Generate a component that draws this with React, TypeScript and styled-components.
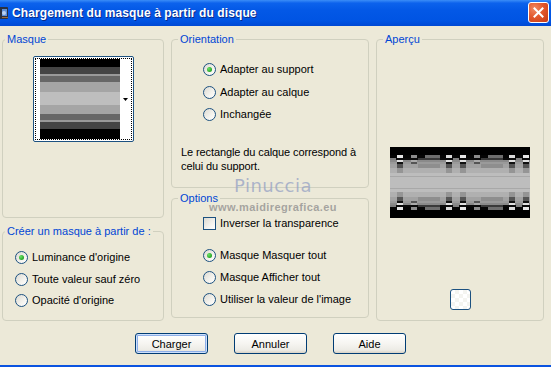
import React from 'react'
import styled, { createGlobalStyle } from 'styled-components'

const GlobalStyle = createGlobalStyle`
  html, body { margin: 0; padding: 0; background: #ECE9D8; }
  body { font-family: "Liberation Sans", Arial, sans-serif; font-size: 11px; color: #000; }
`

const Window = styled.div`
  position: relative;
  width: 551px;
  height: 367px;
  display: flex;
  flex-direction: column;
  background: #ECE9D8;
  border-bottom: 2px solid #0A53E0;
  box-sizing: border-box;
  overflow: hidden;
`
const TitleBar = styled.div`
  height: 26px;
  flex: none;
  display: flex;
  align-items: center;
  padding-right: 2px;
  background: linear-gradient(to bottom, #3B8DF7 0%, #0C62EC 12%, #0358E6 40%, #0054E3 80%, #0049D4 100%);
  box-sizing: border-box;
`
const TitleIcon = styled.div`
  width: 9px;
  height: 14px;
  margin-right: 3px;
  overflow: hidden;
  display: flex;
  justify-content: flex-end;
`
const TitleText = styled.div`
  flex: 1;
  color: #fff;
  font-weight: bold;
  font-size: 12px;
  letter-spacing: 0.1px;
  text-shadow: 1px 1px 0 #0A2A88;
`
const CloseButton = styled.div`
  width: 21px;
  height: 21px;
  margin-top: -2px;
  box-sizing: border-box;
  border: 1px solid #fff;
  border-radius: 3px;
  background: radial-gradient(circle at 30% 30%, #F08A64 0%, #E2582D 45%, #C63A14 100%);
  display: flex;
  align-items: center;
  justify-content: center;
`
const Body = styled.div`
  flex: 1;
  display: flex;
  flex-direction: column;
  padding-top: 7px;
`
const Columns = styled.div`
  display: grid;
  grid-template-columns: 162px 198px 168px;
  column-gap: 7px;
  padding-left: 2px;
  height: 288px;
`
const Column = styled.div<{ $gap?: number }>`
  display: flex;
  flex-direction: column;
  gap: ${p => p.$gap ?? 6}px;
`
const Group = styled.fieldset<{ $height?: number }>`
  margin: 0;
  min-width: 0;
  box-sizing: border-box;
  border: 1px solid #D0D0BF;
  border-radius: 4px;
  padding: 0;
  display: flex;
  flex-direction: column;
  ${p => (p.$height ? `height: ${p.$height}px; flex: none;` : 'flex: 1;')}
`
const Legend = styled.legend<{ $indent?: number }>`
  color: #0046D5;
  font-size: 11px;
  line-height: 13px;
  padding: 0 2px;
  margin-left: ${p => p.$indent ?? 6}px;
`
const GroupContent = styled.div<{ $top: number; $left?: number; $center?: boolean }>`
  display: flex;
  flex-direction: column;
  align-items: ${p => (p.$center ? 'center' : 'flex-start')};
  padding-top: ${p => p.$top}px;
  padding-left: ${p => p.$left ?? 0}px;
`
const OptionList = styled.div<{ $gap: number }>`
  display: flex;
  flex-direction: column;
  gap: ${p => p.$gap}px;
`
const Option = styled.label`
  display: flex;
  align-items: center;
  gap: 4px;
  height: 13px;
  line-height: 13px;
  white-space: nowrap;
`
const RadioDot = styled.span<{ $checked?: boolean }>`
  width: 13px;
  height: 13px;
  flex: none;
  box-sizing: border-box;
  border-radius: 50%;
  border: 1px solid #1C5180;
  background: linear-gradient(135deg, #DCDAD2 0%, #F4F3EE 60%, #FFFFFF 100%);
  display: flex;
  align-items: center;
  justify-content: center;
  &::after {
    content: '';
    width: 5px;
    height: 5px;
    border-radius: 50%;
    background: radial-gradient(circle at 35% 35%, #6BE267, #21A121 75%);
    display: ${p => (p.$checked ? 'block' : 'none')};
  }
`
const CheckBox = styled.span`
  width: 13px;
  height: 13px;
  flex: none;
  box-sizing: border-box;
  border: 1px solid #1C5180;
  background: linear-gradient(135deg, #DCDAD2 0%, #F4F3EE 60%, #FFFFFF 100%);
`
const Note = styled.p`
  margin: 24px 0 0 -22px;
  line-height: 14px;
  letter-spacing: -0.1px;
`
const MaskPicker = styled.div`
  width: 101px;
  height: 86px;
  box-sizing: border-box;
  border: 1px solid #1C5180;
  border-radius: 2px;
  background: #fff;
  padding: 1px;
`
const FocusRect = styled.div`
  height: 100%;
  box-sizing: border-box;
  border: 1px dotted #000;
  display: flex;
  align-items: center;
  padding: 2px 2px 2px 4px;
`
const MaskStrip = styled.div`
  flex: 1;
  height: 100%;
  display: flex;
  align-items: center;
  justify-content: flex-end;
  background: #fff;
`
const Preview = styled.div`
  margin-top: 101px;
  width: 140px;
  height: 71px;
  line-height: 0;
`
const SmallButton = styled.div`
  margin-top: 71px;
  width: 21px;
  height: 21px;
  box-sizing: border-box;
  border: 1px solid #1C5180;
  border-radius: 3px;
  background: repeating-conic-gradient(#F4F4F0 0% 25%, #FFFFFF 0% 50%) 0 0 / 8px 8px;
`
const ButtonRow = styled.div`
  display: flex;
  gap: 26px;
  padding-left: 135px;
  margin-top: 12px;
`
const Button = styled.button<{ $default?: boolean }>`
  width: 73px;
  height: 21px;
  padding: 0;
  box-sizing: border-box;
  border: 1px solid #003C74;
  border-radius: 3px;
  background: linear-gradient(to bottom, #FFFFFF 0%, #F6F5F1 50%, #ECEBE5 85%, #D8D2C6 100%);
  font-family: "Liberation Sans", Arial, sans-serif;
  font-size: 11px;
  color: #000;
  ${p => (p.$default ? 'box-shadow: inset 0 0 0 1px #CEE0FB, inset 0 0 0 2px #8EAFE8;' : '')}
`
const Watermark = styled.div`
  position: absolute;
  left: 212px;
  top: 175px;
  width: 122px;
  display: flex;
  flex-direction: column;
  align-items: center;
  pointer-events: none;
`
const WatermarkName = styled.div`
  font-family: "DejaVu Sans", sans-serif;
  font-size: 18px;
  line-height: 21px;
  letter-spacing: 0.5px;
  color: rgba(150, 162, 196, 0.75);
`
const WatermarkSite = styled.div`
  font-family: "Liberation Sans", Arial, sans-serif;
  font-size: 11px;
  font-weight: bold;
  line-height: 13px;
  letter-spacing: 0.4px;
  color: rgba(140, 140, 140, 0.75);
  margin-top: 5px;
`

const maskBands: [number, number, string][] = [
  [0, 8, '#000'], [8, 15, '#454545'], [15, 17, '#9A9A9A'], [17, 23, '#676767'],
  [23, 33, '#A5A5A5'], [33, 46, '#BEBEBE'], [46, 55, '#A5A5A5'], [55, 61, '#676767'],
  [61, 63, '#9A9A9A'], [63, 70, '#454545'], [70, 80, '#000'],
]

function MaskImage() {
  return (
    <svg width="80" height="80" viewBox="0 0 80 80" style={{ display: 'block', flex: 'none' }}>
      {maskBands.map(([y0, y1, c], i) => (
        <rect key={i} x="0" y={y0} width="80" height={y1 - y0} fill={c} />
      ))}
    </svg>
  )
}

// one half of the preview, mirrored below
const previewTop: { y: number; h: number; base: string; cols: [number, number, string][] }[] = [
  { y: 0, h: 8, base: '#000', cols: [] },
  { y: 8, h: 3, base: '#050505', cols: [[7, 6, '#E6E6E6'], [21, 6, '#8C8C8C'], [35, 15, '#6E6E6E'], [56, 6, '#DADADA']] },
  { y: 11, h: 2, base: '#0A0A0A', cols: [[0, 6, '#808080'], [28, 22, '#3A3A3A']] },
  { y: 13, h: 2, base: '#8A8A8A', cols: [[7, 6, '#E0E0E0'], [56, 6, '#E0E0E0'], [21, 6, '#AAAAAA']] },
  { y: 15, h: 2, base: '#9A9A9A', cols: [[7, 6, '#111'], [21, 6, '#555'], [56, 6, '#111']] },
  { y: 17, h: 4, base: '#A2A2A2', cols: [[7, 6, '#555'], [28, 22, '#8E8E8E'], [56, 6, '#555']] },
  { y: 21, h: 5, base: '#B0B0B0', cols: [[7, 6, '#959595'], [56, 6, '#959595']] },
  { y: 26, h: 10, base: '#BDBDBD', cols: [] },
]

function PreviewImage() {
  const period = 63
  const rows: React.ReactNode[] = []
  previewTop.forEach((r, i) => {
    ;[r.y, 71 - r.y - r.h].forEach((y, side) => {
      rows.push(<rect key={`b${i}-${side}`} x="0" y={y} width="140" height={r.h} fill={r.base} />)
      r.cols.forEach(([x, w, c], j) => {
        for (let off = 0; off + x < 140; off += period) {
          rows.push(
            <rect key={`c${i}-${side}-${j}-${off}`} x={x + off} y={y} width={w} height={r.h} fill={c} />
          )
        }
      })
    })
  })
  return (
    <svg width="140" height="71" viewBox="0 0 140 71" style={{ display: 'block' }}>
      {rows}
      <rect x="0" y="41" width="140" height="1" fill="#A8A8A8" />
      <rect x="0" y="29" width="140" height="1" fill="#A8A8A8" />
    </svg>
  )
}

function Radio({ checked, children }: { checked?: boolean; children: React.ReactNode }) {
  return (
    <Option>
      <RadioDot $checked={checked} />
      {children}
    </Option>
  )
}

export default function App() {
  return (
    <>
      <GlobalStyle />
      <Window>
        <TitleBar>
          <TitleIcon>
            <svg width="16" height="14" viewBox="0 0 16 14" style={{ flex: 'none' }}>
              <rect x="1" y="1" width="14" height="12" rx="1" fill="#2A3140" />
              <rect x="9" y="3" width="5" height="7" fill="#5C8FD8" />
              <circle cx="11" cy="7" r="2" fill="#B8D0F0" />
              <rect x="9" y="11" width="6" height="1" fill="#9C6B3A" />
            </svg>
          </TitleIcon>
          <TitleText>Chargement du masque à partir du disque</TitleText>
          <CloseButton>
            <svg width="11" height="11" viewBox="0 0 11 11">
              <path d="M1.5 1.5 L9.5 9.5 M9.5 1.5 L1.5 9.5" stroke="#fff" strokeWidth="2" strokeLinecap="square" />
            </svg>
          </CloseButton>
        </TitleBar>
        <Body>
          <Columns>
            <Column $gap={7}>
              <Group $height={185}>
                <Legend $indent={2}>Masque</Legend>
                <GroupContent $top={10} $center>
                  <MaskPicker>
                    <FocusRect>
                      <MaskImage />
                      <MaskStrip>
                        <svg width="5" height="3" viewBox="0 0 5 3" style={{ marginRight: 1 }}>
                          <path d="M0 0 H5 L2.5 3 Z" fill="#000" />
                        </svg>
                      </MaskStrip>
                    </FocusRect>
                  </MaskPicker>
                </GroupContent>
              </Group>
              <Group>
                <Legend $indent={2}>Créer un masque à partir de :</Legend>
                <GroupContent $top={13} $left={12}>
                  <OptionList $gap={8.5}>
                    <Radio checked>Luminance d'origine</Radio>
                    <Radio>Toute valeur sauf zéro</Radio>
                    <Radio>Opacité d'origine</Radio>
                  </OptionList>
                </GroupContent>
              </Group>
            </Column>
            <Column $gap={4}>
              <Group $height={155}>
                <Legend $indent={6}>Orientation</Legend>
                <GroupContent $top={17} $left={31}>
                  <OptionList $gap={9.5}>
                    <Radio checked>Adapter au support</Radio>
                    <Radio>Adapter au calque</Radio>
                    <Radio>Inchangée</Radio>
                  </OptionList>
                  <Note>
                    Le rectangle du calque correspond à
                    <br />
                    celui du support.
                  </Note>
                </GroupContent>
              </Group>
              <Group $height={126}>
                <Legend $indent={6}>Options</Legend>
                <GroupContent $top={12} $left={31}>
                  <Option>
                    <CheckBox />
                    Inverser la transparence
                  </Option>
                  <OptionList $gap={9} style={{ marginTop: 19 }}>
                    <Radio checked>Masque Masquer tout</Radio>
                    <Radio>Masque Afficher tout</Radio>
                    <Radio>Utiliser la valeur de l'image</Radio>
                  </OptionList>
                </GroupContent>
              </Group>
            </Column>
            <Column>
              <Group>
                <Legend $indent={6}>Aperçu</Legend>
                <GroupContent $top={0} $center>
                  <Preview>
                    <PreviewImage />
                  </Preview>
                  <SmallButton />
                </GroupContent>
              </Group>
            </Column>
          </Columns>
          <ButtonRow>
            <Button $default>Charger</Button>
            <Button>Annuler</Button>
            <Button>Aide</Button>
          </ButtonRow>
        </Body>
        <Watermark>
          <WatermarkName>Pinuccia</WatermarkName>
          <WatermarkSite>www.maidiregrafica.eu</WatermarkSite>
        </Watermark>
      </Window>
    </>
  )
}
